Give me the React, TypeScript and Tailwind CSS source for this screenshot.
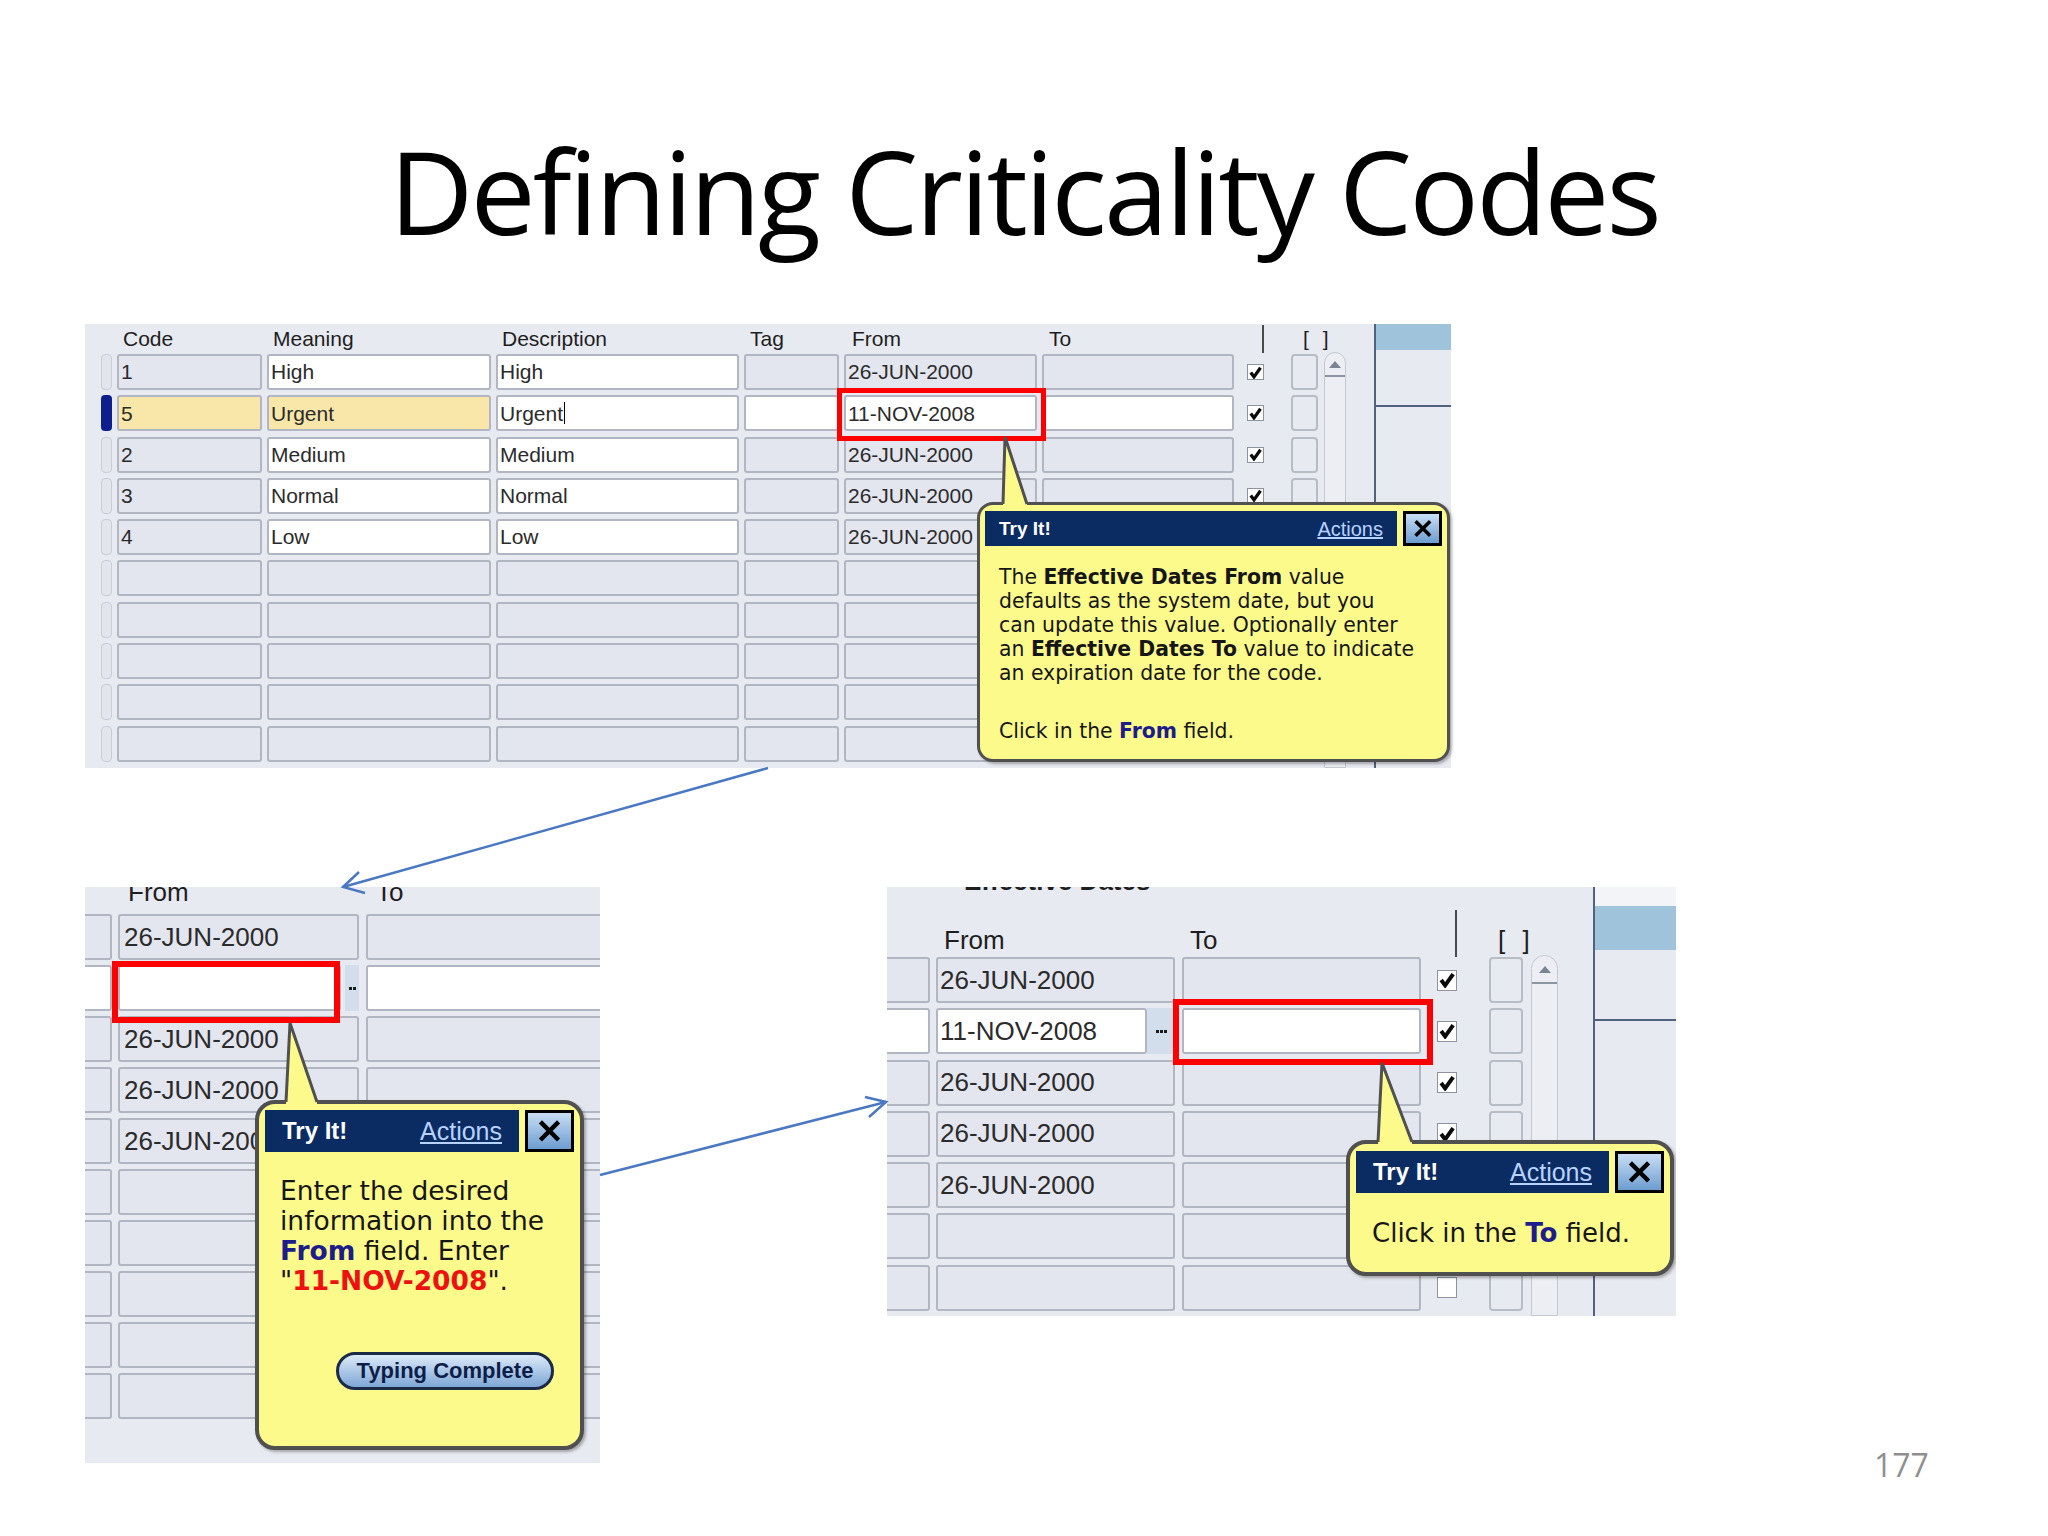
import React from 'react';

const ui = "font-['Liberation_Sans',Arial,sans-serif]";
const tip = "font-['DejaVu_Sans',Verdana,sans-serif]";

const GRAY = 'bg-[#e4e6ef]';
const WHITE = 'bg-white';
const YELLOW = 'bg-[#f9e6a9]';

type CellProps = { className?: string; children?: React.ReactNode };

const Cell = ({ className = '', children }: CellProps) => (
  <div
    className={`h-full shrink-0 flex items-center overflow-hidden whitespace-nowrap rounded-[3px] border-2 border-[#b1b6c2] pl-[2px] text-[#2b2b2b] ${className}`}
  >
    {children}
  </div>
);

const Check = ({ on = true, big = false }: { on?: boolean; big?: boolean }) => (
  <div
    className={`shrink-0 flex items-center justify-center bg-white border border-[#8e939d] ${
      big ? 'w-[20px] h-[21px]' : 'w-[17px] h-[16px]'
    }`}
  >
    {on && (
      <svg viewBox="0 0 12 12" className={big ? 'w-[16px] h-[16px]' : 'w-[13px] h-[13px]'}>
        <path d="M1.6 6 L4.6 10 L10.6 1.6" fill="none" stroke="#0a0a0a" strokeWidth="3" />
      </svg>
    )}
  </div>
);

const Scroll = ({ big = false }: { big?: boolean }) => (
  <div
    className={`shrink-0 self-stretch rounded-t-full border border-[#c3c8d2] bg-[#eceef4] flex flex-col ${
      big ? 'w-[27px]' : 'w-[22px]'
    }`}
  >
    <div className={`flex items-center justify-center border-b-2 border-[#8d95a3] ${big ? 'h-[28px]' : 'h-[24px]'}`}>
      <div className="w-0 h-0 border-l-[6px] border-r-[6px] border-b-[7px] border-l-transparent border-r-transparent border-b-[#7b8494]" />
    </div>
  </div>
);

const CloseBtn = ({ className = '' }: { className?: string }) => (
  <div
    className={`shrink-0 flex items-center justify-center border-[3px] border-black bg-gradient-to-b from-[#c9def4] to-[#6d9dd0] ${className}`}
  >
    <svg viewBox="0 0 20 20" className="w-[72%] h-[72%]">
      <path d="M3 3 L17 17 M17 3 L3 17" stroke="#000" strokeWidth="3.4" />
    </svg>
  </div>
);

const TryBar = ({ big = false }: { big?: boolean }) => (
  <div className={`flex ${big ? 'gap-[6px] h-[42px]' : 'gap-[6px] h-[35px]'}`}>
    <div className={`flex-1 flex items-center justify-between bg-[#0b2c63] ${ui} ${big ? 'px-[17px]' : 'px-[14px]'}`}>
      <span className={`text-white font-bold ${big ? 'text-[24px]' : 'text-[19px]'}`}>Try It!</span>
      <span className={`text-[#b8d2ff] underline ${big ? 'text-[25px]' : 'text-[20px]'}`}>Actions</span>
    </div>
    <CloseBtn className={big ? 'w-[49px]' : 'w-[39px]'} />
  </div>
);

const Tail = ({ className, w, h, d }: { className: string; w: number; h: number; d: [number, number, number, number] }) => {
  const [px, lx, rx, by] = d;
  return (
    <svg className={`absolute ${className}`} width={w} height={h} viewBox={`0 0 ${w} ${h}`}>
      <polygon points={`${px},2 ${rx},${by} ${rx},${h} ${lx},${h} ${lx},${by}`} fill="#fdfa8c" />
      <path d={`M${lx},${by + 2} L${px},2 L${rx},${by + 2}`} fill="none" stroke="#505050" strokeWidth="3" />
    </svg>
  );
};

const DotsBtn = ({ n, className }: { n: number; className: string }) => (
  <div className={`shrink-0 h-full flex items-center justify-center gap-[1px] bg-[#d3deec] ${className}`}>
    {Array.from({ length: n }).map((_, i) => (
      <span key={i} className="w-[3px] h-[3px] bg-[#1b1b1b]" />
    ))}
  </div>
);

const topRows = [
  { code: '1', meaning: 'High', desc: 'High', from: '26-JUN-2000' },
  { code: '5', meaning: 'Urgent', desc: 'Urgent', from: '11-NOV-2008', active: true },
  { code: '2', meaning: 'Medium', desc: 'Medium', from: '26-JUN-2000' },
  { code: '3', meaning: 'Normal', desc: 'Normal', from: '26-JUN-2000' },
  { code: '4', meaning: 'Low', desc: 'Low', from: '26-JUN-2000' },
  { code: '', meaning: '', desc: '', from: '' },
  { code: '', meaning: '', desc: '', from: '' },
  { code: '', meaning: '', desc: '', from: '' },
  { code: '', meaning: '', desc: '', from: '' },
  { code: '', meaning: '', desc: '', from: '' },
];

const TopPanel = () => (
  <div className={`relative ml-[85px] w-[1366px] h-[444px] bg-[#e8eaf1] flex ${ui} text-[21px]`}>
    <div className="w-[1289px] pl-[16px] flex flex-col">
      <div className="h-[30px] flex items-center gap-[5px] leading-[30px] text-[#1e1e1e]">
        <div className="w-[11px] shrink-0" />
        <div className="w-[145px] shrink-0 pl-[6px]">Code</div>
        <div className="w-[224px] shrink-0 pl-[6px]">Meaning</div>
        <div className="w-[243px] shrink-0 pl-[6px]">Description</div>
        <div className="w-[95px] shrink-0 pl-[6px]">Tag</div>
        <div className="w-[193px] shrink-0 pl-[8px]">From</div>
        <div className="w-[192px] shrink-0 pl-[7px]">To</div>
        <div className="ml-[23px] w-[2px] h-[28px] bg-[#4a4a4a]" />
        <div className="ml-[34px] tracking-[4px] whitespace-nowrap">[ ]</div>
      </div>
      <div className="flex flex-1">
        <div className="flex flex-col gap-[5.3px]">
          {topRows.map((r, i) => {
            const filled = r.code !== '';
            return (
              <div key={i} className="h-[36px] flex items-center gap-[5px]">
                <div
                  className={`w-[11px] h-full shrink-0 rounded-[4px] ${
                    r.active ? 'bg-[#0c1f8c]' : 'bg-[#e2e5ee] border border-[#c9cdd6]'
                  }`}
                />
                <Cell className={`w-[145px] ${r.active ? YELLOW : GRAY}`}>{r.code}</Cell>
                <Cell className={`w-[224px] ${r.active ? YELLOW : filled ? WHITE : GRAY}`}>{r.meaning}</Cell>
                <Cell className={`w-[243px] ${filled ? WHITE : GRAY}`}>
                  {r.desc}
                  {r.active && <span className="ml-[1px] w-[1px] h-[22px] bg-black" />}
                </Cell>
                <Cell className={`w-[95px] ${r.active ? WHITE : GRAY}`} />
                <Cell className={`w-[193px] ${r.active ? WHITE : GRAY}`}>{r.from}</Cell>
                <Cell className={`w-[192px] ${r.active ? WHITE : GRAY}`} />
                <div className="flex items-center h-full ml-[8px]">
                  {filled ? <Check /> : <div className="w-[17px]" />}
                  <div className="ml-[27px] w-[27px] h-full rounded-[4px] border-2 border-[#b8bcc5]" />
                </div>
              </div>
            );
          })}
        </div>
        <div className="ml-[6px] -mt-[2px] flex">
          <Scroll />
        </div>
      </div>
    </div>
    <div className="w-[2px] bg-[#51617e]" />
    <div className="flex-1 flex flex-col">
      <div className="h-[26px] bg-[#9ec3da]" />
      <div className="h-[57px] border-b-2 border-[#51617e]" />
    </div>

    <div className="absolute left-[752px] top-[64px] w-[209px] h-[53px] border-[5px] border-[#ff0000]" />

    <div
      className={`absolute left-[892px] top-[178px] w-[473px] h-[260px] rounded-[16px] border-[3px] border-[#505050] bg-[#fdfa8c] px-[5px] pt-[6px] shadow-[2px_2px_3px_rgba(0,0,0,0.3)] ${tip} text-[20.4px] leading-[24px] text-[#161616]`}
    >
      <TryBar />
      <div className="pl-[14px] pt-[19px] whitespace-nowrap">
        <p>
          The <b>Effective Dates From</b> value
          <br />
          defaults as the system date, but you
          <br />
          can update this value. Optionally enter
          <br />
          an <b>Effective Dates To</b> value to indicate
          <br />
          an expiration date for the code.
        </p>
        <p className="mt-[34px]">
          Click in the <b className="text-[#1c1c8a]">From</b> field.
        </p>
      </div>
    </div>
    <Tail className="left-[914px] top-[111px]" w={34} h={73} d={[6, 4, 28, 67]} />
  </div>
);

const blRows = [
  { from: '26-JUN-2000' },
  { from: '', active: true },
  { from: '26-JUN-2000' },
  { from: '26-JUN-2000' },
  { from: '26-JUN-2000' },
  { from: '' },
  { from: '' },
  { from: '' },
  { from: '' },
  { from: '' },
];

const BottomLeft = () => (
  <div className={`relative ml-[85px] w-[515px] h-[576px] shrink-0 overflow-hidden bg-[#e8eaf1] ${ui} text-[26px]`}>
    <div className="h-[27px] flex text-[#1e1e1e]">
      <div className="ml-[43px] w-[248px] -mt-[8px] leading-[26px]">From</div>
      <div className="-mt-[8px] leading-[26px]">To</div>
    </div>
    <div className="flex flex-col gap-[5px]">
      {blRows.map((r, i) => (
        <div key={i} className="h-[46px] flex items-center gap-[6px]">
          <Cell className={`-ml-[6px] w-[33px] ${r.active ? WHITE : GRAY}`} />
          {r.active ? (
            <div className="w-[241px] h-full shrink-0 flex gap-[4px]">
              <Cell className={`w-[223px] ${WHITE}`} />
              <DotsBtn n={2} className="w-[14px]" />
            </div>
          ) : (
            <Cell className={`w-[241px] ${GRAY} pl-[4px]`}>{r.from}</Cell>
          )}
          <Cell className={`ml-[1px] w-[250px] ${r.active ? WHITE : GRAY}`} />
        </div>
      ))}
    </div>

    <div className="absolute left-[27px] top-[74px] w-[228px] h-[62px] border-[6px] border-[#ff0000]" />

    <div
      className={`absolute left-[170px] top-[213px] w-[329px] h-[350px] rounded-[20px] border-[4px] border-[#505050] bg-[#fdfa8c] px-[6px] pt-[6px] shadow-[2px_2px_3px_rgba(0,0,0,0.3)] ${tip} text-[26.5px] leading-[30px] text-[#161616]`}
    >
      <TryBar big />
      <p className="pl-[15px] pt-[24px] whitespace-nowrap">
        Enter the desired
        <br />
        information into the
        <br />
        <b className="text-[#1c1c8a]">From</b> field. Enter
        <br />
        &quot;<b className="text-[#ee1111]">11-NOV-2008</b>&quot;.
      </p>
      <div className="mt-[56px] ml-[71px] w-[218px] h-[38px] rounded-full border-[3px] border-[#1b2a46] bg-gradient-to-b from-[#dce9f8] to-[#7fa7d6] flex items-center justify-center">
        <span className={`${ui} font-bold text-[22px] leading-none text-[#0d1e48]`}>Typing Complete</span>
      </div>
    </div>
    <Tail className="left-[196px] top-[134px]" w={42} h={84} d={[9, 5, 36, 79]} />
  </div>
);

const brRows = [
  { from: '26-JUN-2000', check: true },
  { from: '11-NOV-2008', check: true, active: true },
  { from: '26-JUN-2000', check: true },
  { from: '26-JUN-2000', check: true },
  { from: '26-JUN-2000', check: true },
  { from: '', check: false },
  { from: '', check: false },
];

const BottomRight = () => (
  <div className={`relative ml-[287px] w-[789px] h-[429px] shrink-0 overflow-hidden bg-[#e8eaf1] flex ${ui} text-[26px]`}>
    <div className="w-[706px] flex flex-col">
      <div className="h-[70px] flex text-[#1e1e1e]">
        <div className="w-[43px] shrink-0" />
        <div className="ml-[6px] w-[239px] shrink-0 flex flex-col">
          <div className="ml-[28px] -mt-[19px] h-[26px] leading-[26px] font-bold whitespace-nowrap">Effective Dates</div>
          <div className="mt-auto mb-[2px] pl-[8px] leading-[30px]">From</div>
        </div>
        <div className="ml-[7px] w-[239px] shrink-0 flex flex-col">
          <div className="mt-auto mb-[2px] pl-[8px] leading-[30px]">To</div>
        </div>
        <div className="ml-[16px] w-[20px] shrink-0 flex justify-end">
          <div className="mt-[23px] w-[2px] h-[47px] bg-[#4a4a4a]" />
        </div>
        <div className="ml-[32px] w-[34px] shrink-0 flex flex-col">
          <div className="mt-auto mb-[2px] pl-[9px] leading-[30px] tracking-[5px] whitespace-nowrap">[ ]</div>
        </div>
      </div>
      <div className="flex flex-1">
        <div className="flex flex-col gap-[5.3px]">
          {brRows.map((r, i) => (
            <div key={i} className="h-[46px] flex items-center">
              <Cell className={`-ml-[6px] w-[49px] ${r.active ? WHITE : GRAY}`} />
              {r.active ? (
                <div className="ml-[6px] w-[239px] h-full shrink-0 flex">
                  <Cell className={`w-[211px] ${WHITE}`}>{r.from}</Cell>
                  <DotsBtn n={3} className="w-[28px]" />
                </div>
              ) : (
                <Cell className={`ml-[6px] w-[239px] ${GRAY}`}>{r.from}</Cell>
              )}
              <Cell className={`ml-[7px] w-[239px] ${r.active ? WHITE : GRAY}`} />
              <div className="ml-[16px]">
                <Check on={r.check} big />
              </div>
              <div className="ml-[32px] w-[34px] h-full rounded-[4px] border-2 border-[#b8bcc5]" />
            </div>
          ))}
        </div>
        <div className="ml-[8px] -mt-[2px] flex">
          <Scroll big />
        </div>
      </div>
    </div>
    <div className="w-[2px] bg-[#51617e]" />
    <div className="flex-1 flex flex-col">
      <div className="h-[19px] bg-[#f3f4f8]" />
      <div className="h-[44px] bg-[#9ec3da]" />
      <div className="h-[71px] border-b-2 border-[#51617e]" />
    </div>

    <div className="absolute left-[286px] top-[112px] w-[260px] h-[66px] border-[6px] border-[#ff0000]" />

    <div
      className={`absolute left-[459px] top-[253px] w-[328px] h-[136px] rounded-[20px] border-[4px] border-[#505050] bg-[#fdfa8c] px-[6px] pt-[7px] shadow-[2px_2px_3px_rgba(0,0,0,0.3)] ${tip} text-[26px] leading-[30px] text-[#161616]`}
    >
      <TryBar big />
      <p className="pl-[16px] pt-[25px] whitespace-nowrap">
        Click in the <b className="text-[#1c1c8a]">To</b> field.
      </p>
    </div>
    <Tail className="left-[486px] top-[174px]" w={44} h={84} d={[9, 5, 39, 79]} />
  </div>
);

export default function App() {
  return (
    <div className="relative w-[2048px] h-[1536px] overflow-hidden bg-white">
      <div className="pt-[132px]">
        <h1 className="h-[116px] text-center font-['Open_Sans',sans-serif] text-[116px] leading-none tracking-[-0.025em] text-black">
          Defining Criticality Codes
        </h1>
      </div>

      <div className="mt-[76px]">
        <TopPanel />
      </div>

      <div className="mt-[119px] flex items-start">
        <BottomLeft />
        <BottomRight />
        <div className="ml-[198px] mt-[558px] font-['Open_Sans',sans-serif] text-[32px] leading-[40px] text-[#8f8f8f]">
          177
        </div>
      </div>

      <svg className="absolute inset-0 pointer-events-none" width={2048} height={1536} viewBox="0 0 2048 1536">
        <g fill="none" stroke="#4a78c2" strokeWidth="2.5">
          <line x1="768" y1="768" x2="343" y2="887" />
          <path d="M359 872 L343 887 L365 893" />
          <line x1="600" y1="1175" x2="886" y2="1102" />
          <path d="M865 1097 L886 1102 L869 1117" />
        </g>
      </svg>
    </div>
  );
}
